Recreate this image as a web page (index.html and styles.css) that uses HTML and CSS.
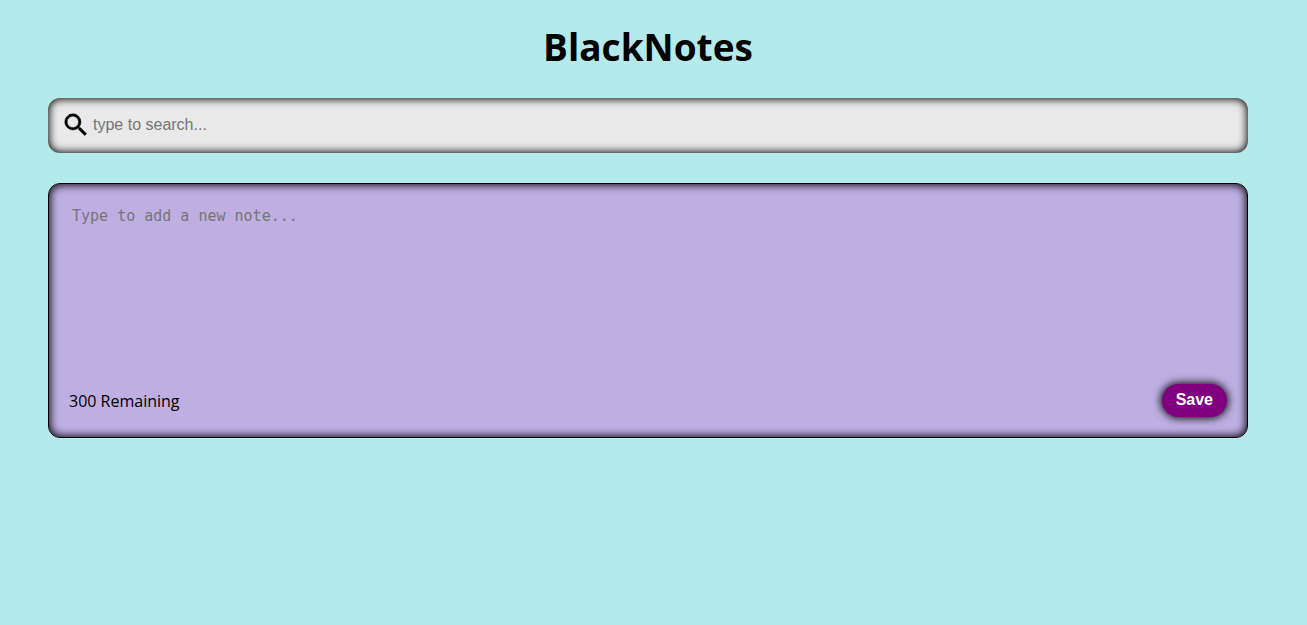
FILE: index.html
```html
<!DOCTYPE html>
<html lang="en">
<head>
<meta charset="utf-8">
<meta name="viewport" content="width=device-width, initial-scale=1">
<title>BlackNotes</title>
<link rel="stylesheet" href="styles.css">
</head>
<body>
<main class="container">
  <h1 class="title">BlackNotes</h1>
  <div class="search">
    <svg class="search-icon" viewBox="0 0 24 24" aria-hidden="true"><path fill="currentColor" stroke="currentColor" stroke-width="0.35" d="M15.5 14h-.79l-.28-.27A6.471 6.471 0 0 0 16 9.5 6.5 6.5 0 1 0 9.5 16c1.61 0 3.09-.59 4.23-1.57l.27.28v.79l5 4.99L20.49 19l-4.99-5zm-6 0C7.01 14 5 11.99 5 9.5S7.01 5 9.5 5 14 7.01 14 9.5 11.99 14 9.5 14z"/></svg>
    <input class="search-input" type="text" placeholder="type to search..." aria-label="Search notes">
  </div>
  <div class="notes">
    <section class="note">
      <textarea class="note-text" placeholder="Type to add a new note..." aria-label="New note"></textarea>
      <div class="note-footer">
        <small class="remaining">300 Remaining</small>
        <button class="save" type="button">Save</button>
      </div>
    </section>
  </div>
</main>
</body>
</html>
```

FILE: styles.css
```css
* {
  box-sizing: border-box;
}

body {
  margin: 0;
  background: #b4eaea;
  color: #000;
  font-family: "Segoe UI", "Open Sans", "Noto Sans", sans-serif;
}

.container {
  margin: 0 59px 0 48px;
  padding-top: 20px;
}

.title {
  margin: 0 0 24px;
  font-size: 37px;
  line-height: 54px;
  text-align: center;
}

.search {
  display: flex;
  align-items: center;
  padding: 12px 13px 13px;
  border-radius: 12px;
  background: #e9e9e9;
  box-shadow: inset 0 0 8px 1px #000;
}

.search-icon {
  width: 30px;
  height: 30px;
}

.search-input {
  flex: 1;
  padding: 1px 2px;
  border: 0;
  outline: 0;
  background: transparent;
  font: 16px "Liberation Sans", Arial, sans-serif;
}

.notes {
  margin-top: 30px;
}

.note {
  display: flex;
  flex-direction: column;
  padding: 20px;
  border: 1px solid #000;
  border-radius: 12px;
  background: #beaee2;
  box-shadow: inset 0 0 8px 1px #000;
}

.note-text {
  height: 180px;
  padding: 2px 3px;
  border: 0;
  outline: 0;
  resize: none;
  background: transparent;
  font: 15px/20px Consolas, "DejaVu Sans Mono", monospace;
}

.note-footer {
  display: flex;
  align-items: center;
  justify-content: space-between;
}

.remaining {
  font-size: 16px;
}

.save {
  padding: 6px 14px 8px;
  border: 0;
  border-radius: 18px;
  background: purple;
  color: #fff;
  font: bold 16px/19px "Liberation Sans", Arial, sans-serif;
  box-shadow: 0 0 8px 1px #000;
}
```
